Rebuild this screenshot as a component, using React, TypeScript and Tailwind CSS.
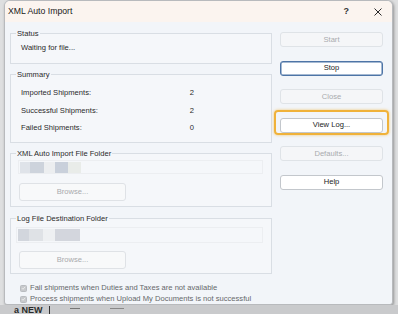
import React from "react";

const btnBase =
  "h-[15px] w-[103px] rounded-[3px] border text-[7.6px] leading-none flex items-center justify-center";
const btnDisabled = `${btnBase} bg-[#f5f6f8] border-[#dfe3e7] text-[#a9abae]`;
const btnNormal = `${btnBase} bg-white border-[#c3c7cc] text-[#1c1c1c]`;
const btnDefault = `${btnBase} bg-white border-[#4d74a6] text-[#1c1c1c] shadow-[inset_0_0_0_0.5px_#4d74a6]`;

function Check() {
  return (
    <span className="w-[7px] h-[7px] rounded-[1.5px] bg-[#c7c9cc] border border-[#b9bcc0] flex items-center justify-center">
      <svg width="6" height="6" viewBox="0 0 6 6">
        <path d="M1 3.1 L2.4 4.5 L5 1.6" stroke="#f2f2f2" strokeWidth="1" fill="none" />
      </svg>
    </span>
  );
}

export default function App() {
  return (
    <div className="w-[398px] h-[314px] bg-[#dedfe0] overflow-hidden flex flex-col font-['Liberation_Sans',Arial,sans-serif]">
      <div className="ml-[4px] w-[389px] h-[305px] shrink-0 rounded-t-[6px] rounded-b-[3px] border border-[#b8babd] bg-[#f2f5f9] flex flex-col shadow-[1px_1px_3px_rgba(0,0,0,0.35)] overflow-hidden">
        {/* Title bar */}
        <div className="h-[21px] shrink-0 bg-[#fbf4ef] flex items-center pl-[3px] text-[#1a1a1a]">
          <span className="text-[8.7px] leading-none">XML Auto Import</span>
          <span className="ml-auto mr-[25px] text-[9px] font-bold leading-none text-[#333]">?</span>
          <svg className="mr-[10px]" width="8" height="8" viewBox="0 0 8 8">
            <path d="M0.5 0.5 L7.5 7.5 M7.5 0.5 L0.5 7.5" stroke="#2a2a2a" strokeWidth="1" />
          </svg>
        </div>

        {/* Body */}
        <div className="flex-1 flex pl-[5px] text-[7.6px] text-[#2a2a2a]">
          {/* Left column */}
          <div className="w-[262px] flex flex-col">
            <fieldset className="mt-[6.5px] h-[35.5px] border border-[#d9dee4] bg-[#f5f7fa] pl-[5px] pr-[5px]">
              <legend className="px-[1px] leading-[9px]">Status</legend>
              <div className="mt-[5px] pl-[5px] leading-[9px]">Waiting for file...</div>
            </fieldset>

            <fieldset className="mt-[5.5px] h-[73.5px] border border-[#d9dee4] bg-[#f5f7fa] pl-[5px] pr-[5px]">
              <legend className="px-[1px] leading-[9px]">Summary</legend>
              <div className="mt-[5.75px] pl-[5px] w-[178px] flex flex-col">
                <div className="h-[17.5px] flex items-center justify-between">
                  <span>Imported Shipments:</span>
                  <span>2</span>
                </div>
                <div className="h-[17.5px] flex items-center justify-between">
                  <span>Successful Shipments:</span>
                  <span>2</span>
                </div>
                <div className="h-[17.5px] flex items-center justify-between">
                  <span>Failed Shipments:</span>
                  <span>0</span>
                </div>
              </div>
            </fieldset>

            <fieldset className="mt-[5.5px] h-[58.5px] border border-[#d9dee4] bg-[#f5f7fa] pl-[5px] pr-[5px]">
              <legend className="px-[1px] leading-[9px]">XML Auto Import File Folder</legend>
              <div className="mt-[2.5px] ml-[2px] w-[245px] h-[14px] border border-[#eceef1] flex items-center pl-[1px]">
                <div className="flex h-[11px] blur-[0.6px]">
                  <span className="w-[10px] bg-[#dfe3e9]" />
                  <span className="w-[14px] bg-[#cdd3dc]" />
                  <span className="w-[11px] bg-[#eceef0]" />
                  <span className="w-[13px] bg-[#c9d0db]" />
                  <span className="w-[13px] bg-[#e9ece9]" />
                </div>
              </div>
              <div className="mt-[9px] ml-[3px] h-[18px] w-[107px] rounded-[3px] border border-[#dfe2e6] bg-[#f8f9fa] text-[#a8aaad] flex items-center justify-center">
                Browse...
              </div>
            </fieldset>

            <fieldset className="mt-[6.5px] h-[60.5px] border border-[#d9dee4] bg-[#f5f7fa] pl-[5px] pr-[5px]">
              <legend className="px-[1px] leading-[9px]">Log File Destination Folder</legend>
              <div className="mt-[4.5px] w-[247px] h-[16px] border border-[#eceef1] flex items-center pl-[1px]">
                <div className="flex h-[12px] blur-[0.6px]">
                  <span className="w-[11px] bg-[#d2d6dd]" />
                  <span className="w-[14px] bg-[#dfe2e6]" />
                  <span className="w-[12px] bg-[#eef0f2]" />
                  <span className="w-[25px] bg-[#d3d6dd]" />
                </div>
              </div>
              <div className="mt-[8px] ml-[3px] h-[17.5px] w-[107px] rounded-[3px] border border-[#dfe2e6] bg-[#f8f9fa] text-[#a8aaad] flex items-center justify-center">
                Browse...
              </div>
            </fieldset>

            <div className="mt-[8.5px] pl-[10px] flex flex-col text-[#65676a] whitespace-nowrap">
              <div className="h-[11px] flex items-center gap-[3px]">
                <Check />
                <span>Fail shipments when Duties and Taxes are not available</span>
              </div>
              <div className="h-[11px] flex items-center gap-[3px]">
                <Check />
                <span>Process shipments when Upload My Documents is not successful</span>
              </div>
            </div>
          </div>

          {/* Right column */}
          <div className="ml-[8px] mt-[10px] flex flex-col gap-[13.5px]">
            <div className={btnDisabled}>Start</div>
            <div className={btnDefault}>Stop</div>
            <div className={btnDisabled}>Close</div>
            <div className="relative">
              <div className={btnNormal}>View Log...</div>
              <div className="absolute left-[-6px] top-[-8px] w-[115px] h-[25px] rounded-[4px] border-[2.5px] border-[#f0b23a] shadow-[0_0_3px_rgba(240,178,58,0.7)] pointer-events-none" />
            </div>
            <div className={btnDisabled}>Defaults...</div>
            <div className={btnNormal}>Help</div>
          </div>
        </div>
      </div>

      {/* Desktop strip below */}
      <div className="flex-1 bg-[#c9cacc] flex items-start pl-[14px] text-[9px] font-bold leading-none text-[#2a2a2a] overflow-hidden">
        <span className="mt-[1px]">a NEW</span>
        <span className="ml-[6px] mt-[1px] w-[1px] h-[9px] bg-[#333]" />
        <span className="ml-[20px] mt-[3px] w-[10px] h-[1px] bg-[#777]" />
        <span className="ml-[30px] mt-[3px] w-[14px] h-[1px] bg-[#888]" />
      </div>
    </div>
  );
}
